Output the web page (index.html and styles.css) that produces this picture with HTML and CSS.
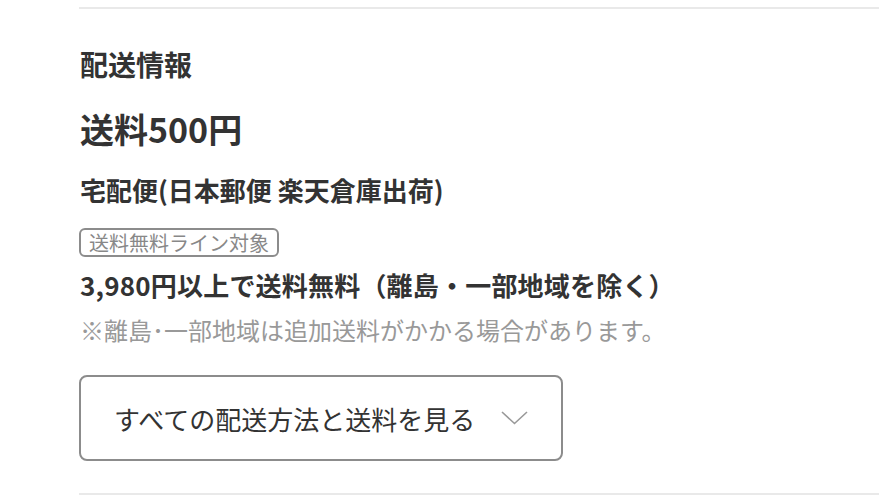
FILE: index.html
```html
<!DOCTYPE html>
<html lang="ja">
<head>
    <meta charset="UTF-8">
    <meta name="viewport" content="width=device-width, initial-scale=1.0">
    <title>配送情報</title>
    <link rel="stylesheet" href="styles.css">
</head>
<body>
    <div class="shipping">
        <h2 class="shipping-title">配送情報</h2>
        <p class="shipping-price">送料500円</p>
        <p class="shipping-method">宅配便(日本郵便 楽天倉庫出荷)</p>
        <span class="free-badge">送料無料ライン対象</span>
        <p class="free-line">3,980円以上で送料無料（離島・一部地域を除く）</p>
        <p class="free-note">※離島･一部地域は追加送料がかかる場合があります。</p>
        <button class="methods-btn" type="button">
            すべての配送方法と送料を見る
            <svg class="chevron" width="27" height="14" viewBox="0 0 27 14">
                <polyline points="1,1 13.5,12.5 26,1" fill="none" stroke="#999" stroke-width="1.6"/>
            </svg>
        </button>
    </div>
</body>
</html>
```

FILE: styles.css
```css
body {
    margin: 0;
    background-color: #fff;
    font-family: "Noto Sans CJK JP", "Noto Sans", sans-serif;
    color: #333;
}
.shipping {
    margin: 7px 0 0 79px;
    width: 800px;
    border-top: 2px solid #e9e9e9;
    border-bottom: 2px solid #e9e9e9;
    padding: 37px 0 32px 0;
    display: flex;
    flex-direction: column;
    align-items: flex-start;
}
.shipping-title {
    margin: 0 0 0 1px;
    font-size: 28px;
    line-height: 36px;
    font-weight: bold;
}
.shipping-price {
    margin: 25px 0 0 1px;
    font-size: 34px;
    line-height: 44px;
    font-weight: bold;
}
.shipping-method {
    margin: 21px 0 0 1px;
    font-size: 26px;
    line-height: 36px;
    font-weight: bold;
}
.free-badge {
    margin-top: 20px;
    border: 2px solid #8c8c8c;
    border-radius: 6px;
    padding: 0 8px;
    font-size: 20px;
    line-height: 25px;
    color: #888;
}
.free-line {
    margin: 10px 0 0 1px;
    font-size: 26px;
    line-height: 36px;
    font-weight: bold;
    letter-spacing: 0.2px;
}
.free-note {
    margin: 10px 0 0 1px;
    font-size: 24px;
    line-height: 34px;
    color: #999;
}
.methods-btn {
    margin-top: 28px;
    width: 484px;
    height: 86px;
    border: 2px solid #8c8c8c;
    border-radius: 8px;
    background-color: #fff;
    padding: 0 0 0 33px;
    display: flex;
    align-items: center;
    gap: 26px;
    font-family: inherit;
    font-size: 26px;
    color: #333;
}
.chevron {
    display: block;
}
```
